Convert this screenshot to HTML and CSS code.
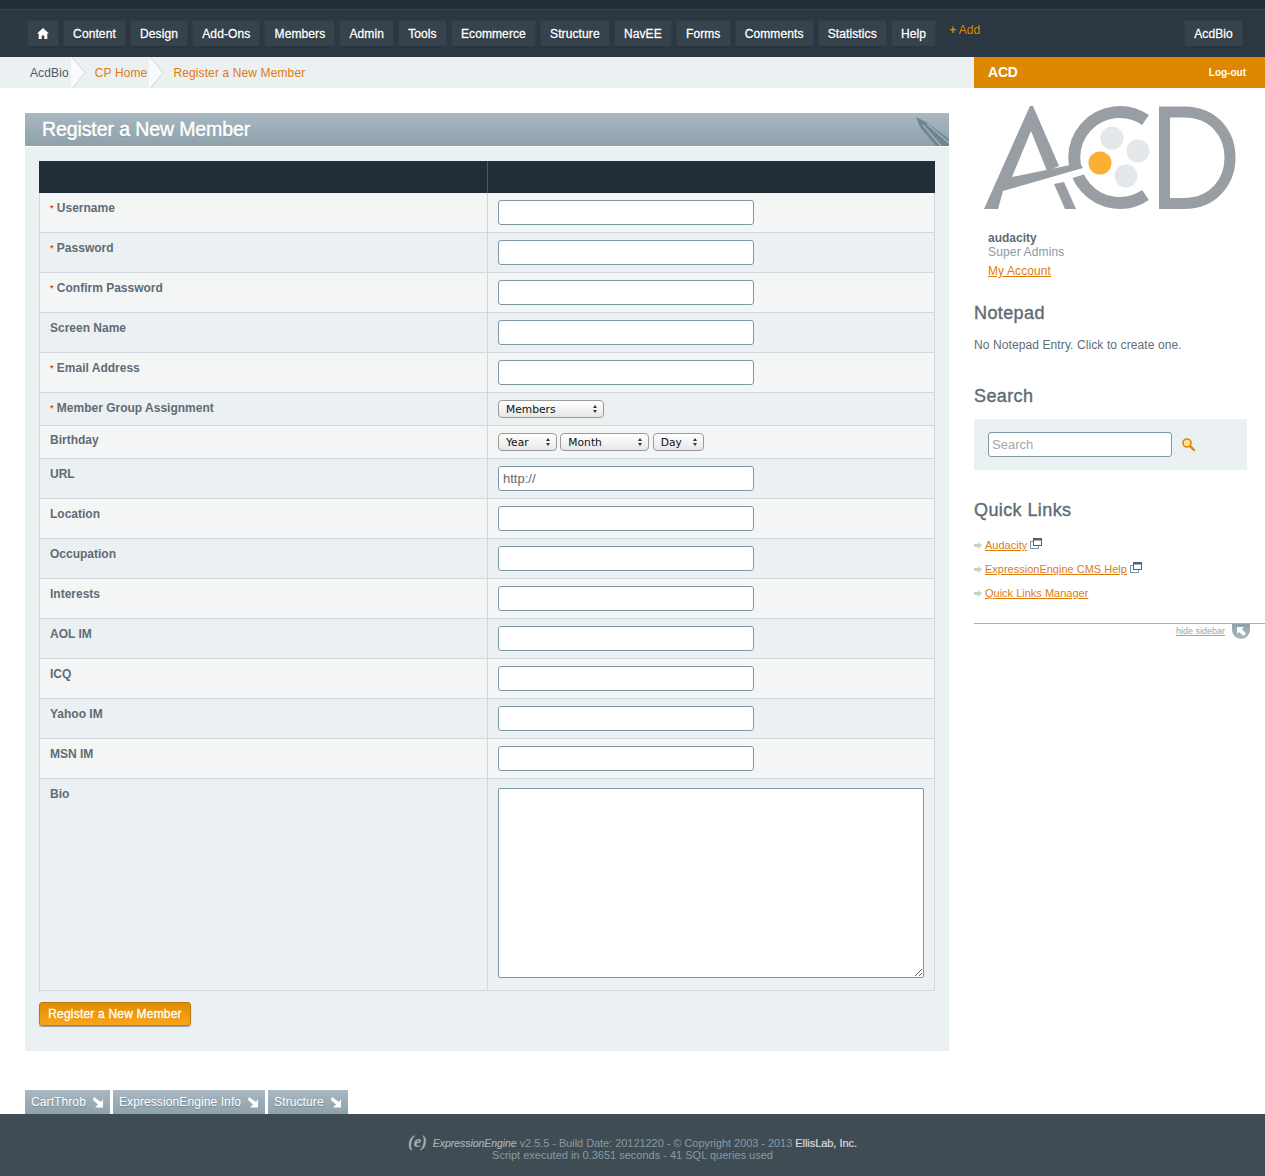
FILE: index.html
```html
<!DOCTYPE html>
<html lang="en">
<head>
  <meta charset="UTF-8">
  <title>Register a New Member | ExpressionEngine</title>
  <link rel="stylesheet" href="styles.css">
</head>
<body>

  <nav class="topnav">
    <ul class="nav-list">
      <li><a class="nav-btn nav-home" href="#"><svg width="12" height="11" viewBox="0 0 12 11"><path d="M6 0 L12 5.6 H10.3 V11 H7.3 V7.4 H4.7 V11 H1.7 V5.6 H0 Z" fill="#fff"/></svg></a></li>
      <li><a class="nav-btn" href="#">Content</a></li>
      <li><a class="nav-btn" href="#">Design</a></li>
      <li><a class="nav-btn" href="#">Add-Ons</a></li>
      <li><a class="nav-btn" href="#">Members</a></li>
      <li><a class="nav-btn" href="#">Admin</a></li>
      <li><a class="nav-btn" href="#">Tools</a></li>
      <li><a class="nav-btn" href="#">Ecommerce</a></li>
      <li><a class="nav-btn" href="#">Structure</a></li>
      <li><a class="nav-btn" href="#">NavEE</a></li>
      <li><a class="nav-btn" href="#">Forms</a></li>
      <li><a class="nav-btn" href="#">Comments</a></li>
      <li><a class="nav-btn" href="#">Statistics</a></li>
      <li><a class="nav-btn" href="#">Help</a></li>
      <li><a class="nav-add" href="#"><b>+</b> Add</a></li>
    </ul>
    <a class="nav-btn nav-site" href="#">AcdBio</a>
  </nav>

  <div class="subbar">
    <div class="crumbs">
      <a class="crumb crumb-first" href="#">AcdBio</a>
      <svg class="chevron" width="15" height="31" viewBox="0 0 15 31"><polygon points="0,0 1,0 14,15.5 1,31 0,31" fill="#f9fafb"/><polyline points="1,0 14,15.5 2,31" fill="none" stroke="#ced6dc"/></svg>
      <a class="crumb" href="#">CP Home</a>
      <svg class="chevron" width="15" height="31" viewBox="0 0 15 31"><polygon points="0,0 1,0 14,15.5 1,31 0,31" fill="#f9fafb"/><polyline points="1,0 14,15.5 2,31" fill="none" stroke="#ced6dc"/></svg>
      <a class="crumb" href="#">Register a New Member</a>
    </div>
    <div class="site-bar">
      <span class="site-name">ACD</span>
      <a class="logout" href="#">Log-out</a>
    </div>
  </div>

  <div class="page">
    <main class="main">
      <h2 class="page-title">Register a New Member
        <svg class="title-icon" width="34" height="33" viewBox="0 0 34 33"><path d="M1 4 L11 9 L34 26 V33 H21 L5 14 Z" fill="#6f8592"/><path d="M8 12 L26 33 M12 11 L34 30" stroke="#9fb0ba" stroke-width="1.5" fill="none"/></svg>
      </h2>
      <div class="panel">
        <form>
          <table class="form-table">
            <thead>
              <tr><th></th><th></th></tr>
            </thead>
            <tbody>
              <tr class="odd"><td class="lbl"><i>*</i> Username</td><td><input class="field" type="text"></td></tr>
              <tr><td class="lbl"><i>*</i> Password</td><td><input class="field" type="password"></td></tr>
              <tr class="odd"><td class="lbl"><i>*</i> Confirm Password</td><td><input class="field" type="password"></td></tr>
              <tr><td class="lbl">Screen Name</td><td><input class="field" type="text"></td></tr>
              <tr class="odd"><td class="lbl"><i>*</i> Email Address</td><td><input class="field" type="text"></td></tr>
              <tr class="row-select"><td class="lbl"><i>*</i> Member Group Assignment</td><td>
                <span class="sel sel-group"><select><option>Members</option></select></span>
              </td></tr>
              <tr class="odd row-select"><td class="lbl">Birthday</td><td>
                <span class="sel sel-year"><select><option>Year</option></select></span>
                <span class="sel sel-month"><select><option>Month</option></select></span>
                <span class="sel sel-day"><select><option>Day</option></select></span>
              </td></tr>
              <tr><td class="lbl">URL</td><td><input class="field" type="text" value="http://"></td></tr>
              <tr class="odd"><td class="lbl">Location</td><td><input class="field" type="text"></td></tr>
              <tr><td class="lbl">Occupation</td><td><input class="field" type="text"></td></tr>
              <tr class="odd"><td class="lbl">Interests</td><td><input class="field" type="text"></td></tr>
              <tr><td class="lbl">AOL IM</td><td><input class="field" type="text"></td></tr>
              <tr class="odd"><td class="lbl">ICQ</td><td><input class="field" type="text"></td></tr>
              <tr><td class="lbl">Yahoo IM</td><td><input class="field" type="text"></td></tr>
              <tr class="odd"><td class="lbl">MSN IM</td><td><input class="field" type="text"></td></tr>
              <tr class="row-bio"><td class="lbl">Bio</td><td><textarea class="bio"></textarea></td></tr>
            </tbody>
          </table>
          <button class="submit" type="submit">Register a New Member</button>
        </form>
      </div>
    </main>

    <aside class="sidebar">
      <svg class="logo" width="266" height="115" viewBox="974 100 266 115">
        <path d="M1145.5 120 A45.5 45.5 0 1 0 1145.5 195" fill="none" stroke="#989ea3" stroke-width="12"/>
        <polygon points="1000,193 1090,165 1092,172 1004,199" fill="#fff"/>
        <path d="M984 209 L1030 106 L1033 106 L1059 166 L1047 171 L1031 131 L1012 177 L1080 163 L1083 168 L1003 191 L998 209 Z" fill="#989ea3"/>
        <polygon points="1054,184 1064,182 1076,209 1065,209" fill="#989ea3"/>
        <path d="M1164.5 112 V203.5 H1184 C1214 203.5 1230 181 1230 157.5 C1230 134 1214 112 1184 112 Z" fill="none" stroke="#989ea3" stroke-width="11"/>
        <circle cx="1100" cy="163" r="11.5" fill="#fbb034"/>
        <circle cx="1112" cy="138" r="11.5" fill="#e5e8ea"/>
        <circle cx="1138" cy="151" r="11.5" fill="#e5e8ea"/>
        <circle cx="1126" cy="176" r="11.5" fill="#e5e8ea"/>
      </svg>

      <div class="user-info">
        <strong>audacity</strong>
        <span class="user-group">Super Admins</span>
        <a class="user-link" href="#">My Account</a>
      </div>

      <h3 class="side-title side-notepad">Notepad</h3>
      <p class="notepad-text">No Notepad Entry. Click to create one.</p>

      <h3 class="side-title side-search">Search</h3>
      <div class="search-box">
        <input class="field search-input" type="text" placeholder="Search">
        <svg class="search-icon" width="15" height="15" viewBox="0 0 15 15"><circle cx="6" cy="6" r="4" fill="#fbe3a6" stroke="#dd8800" stroke-width="1.6"/><path d="M9 9 L13 13" stroke="#dd8800" stroke-width="2.4" stroke-linecap="round"/></svg>
      </div>

      <h3 class="side-title side-links">Quick Links</h3>
      <ul class="quick-links">
        <li><svg class="bullet" width="8" height="7" viewBox="0 0 8 7"><path d="M0 2 H4 V0 L8 3.5 L4 7 V5 H0 Z" fill="#c6d2c8"/></svg><a href="#">Audacity</a><svg class="ext" width="12" height="11" viewBox="0 0 12 11"><rect x="0.5" y="3.5" width="8" height="7" fill="#fff" stroke="#7f98ab"/><rect x="3.5" y="0.5" width="8" height="7" fill="#fff" stroke="#4e6272"/><rect x="3" y="0" width="9" height="2.5" fill="#4e6272"/></svg></li>
        <li><svg class="bullet" width="8" height="7" viewBox="0 0 8 7"><path d="M0 2 H4 V0 L8 3.5 L4 7 V5 H0 Z" fill="#c6d2c8"/></svg><a href="#">ExpressionEngine CMS Help</a><svg class="ext" width="12" height="11" viewBox="0 0 12 11"><rect x="0.5" y="3.5" width="8" height="7" fill="#fff" stroke="#7f98ab"/><rect x="3.5" y="0.5" width="8" height="7" fill="#fff" stroke="#4e6272"/><rect x="3" y="0" width="9" height="2.5" fill="#4e6272"/></svg></li>
        <li><svg class="bullet" width="8" height="7" viewBox="0 0 8 7"><path d="M0 2 H4 V0 L8 3.5 L4 7 V5 H0 Z" fill="#c6d2c8"/></svg><a href="#">Quick Links Manager</a></li>
      </ul>

      <div class="side-foot">
        <a class="hide-link" href="#">hide sidebar</a>
        <span class="hide-btn"><svg width="9" height="9" viewBox="0 0 9 9"><path d="M0 0 H7 L5 2 L9 6.5 L6.5 9 L2 5 L0 7 Z" fill="#fff"/></svg></span>
      </div>
    </aside>
  </div>

  <div class="tabs">
    <a class="tab" href="#">CartThrob <svg width="11" height="11" viewBox="0 0 11 11"><path d="M1 0 L8 5 L10 2 V10.5 H2 L5 7.5 L0 3 Z" fill="#fff"/></svg></a>
    <a class="tab" href="#">ExpressionEngine Info <svg width="11" height="11" viewBox="0 0 11 11"><path d="M1 0 L8 5 L10 2 V10.5 H2 L5 7.5 L0 3 Z" fill="#fff"/></svg></a>
    <a class="tab" href="#">Structure <svg width="11" height="11" viewBox="0 0 11 11"><path d="M1 0 L8 5 L10 2 V10.5 H2 L5 7.5 L0 3 Z" fill="#fff"/></svg></a>
  </div>

  <footer class="footer">
    <p class="footer-build"><span class="ee-mark">(e)</span> <em>ExpressionEngine</em> v2.5.5 - Build Date: 20121220 - © Copyright 2003 - 2013 <strong>EllisLab, Inc.</strong></p>
    <p>Script executed in 0.3651 seconds - 41 SQL queries used</p>
  </footer>

</body>
</html>
```

FILE: styles.css
```css
* {
  box-sizing: border-box;
}

body {
  margin: 0;
  background: #fff;
  font-family: 'Liberation Sans', Arial, sans-serif;
  font-size: 12px;
  color: #5f6c74;
}

a {
  color: #e07b10;
}

/* top nav */
.topnav {
  display: flex;
  justify-content: space-between;
  align-items: flex-start;
  height: 57px;
  padding: 11px 22px 0 27px;
  background: #2c3841;
  border-top: 9px solid #222e37;
  box-shadow: inset 0 1px 0 #364550;
}

.nav-list {
  display: flex;
  gap: 4px;
  margin: 0;
  padding: 0;
  list-style: none;
}

.nav-btn {
  display: block;
  height: 27px;
  padding: 0 9.12px;
  background: #36434d;
  border: 1px solid #2f3c45;
  border-bottom-color: #28333b;
  color: #fff;
  font-size: 12px;
  letter-spacing: 0.1px;
  line-height: 26px;
  text-decoration: none;
  text-shadow: 0 1px 1px #1c252c;
  -webkit-text-stroke: 0.3px #fff;
}

.nav-home {
  display: flex;
  align-items: center;
  padding: 0 9px;
}

.nav-add {
  display: block;
  margin-left: 9px;
  color: #dd8800;
  font-size: 12px;
  line-height: 20px;
  text-decoration: none;
}

/* breadcrumb row */
.subbar {
  display: flex;
  height: 31px;
}

.crumbs {
  display: flex;
  align-items: center;
  flex: 1;
  background: #ebf0f3;
}

.crumb {
  padding-top: 1px;
  font-size: 12px;
  letter-spacing: 0.12px;
  line-height: 30px;
  text-decoration: none;
}

.crumb-first {
  padding-left: 30px;
  color: #4f5a62;
}

.chevron {
  margin: 0 9px 0 3px;
}

.crumb + .chevron {
  margin-left: 2px;
}

.site-bar {
  display: flex;
  justify-content: space-between;
  align-items: center;
  width: 291px;
  padding: 0 19px 0 14px;
  background: #dd8800;
  color: #fff;
}

.site-name {
  margin-top: -1px;
  font-size: 14px;
  font-weight: bold;
  letter-spacing: -0.2px;
}

.logout {
  color: #fff;
  font-size: 10px;
  font-weight: bold;
  text-decoration: none;
}

/* columns */
.page {
  display: flex;
  align-items: flex-start;
}

.main {
  width: 924px;
  margin: 25px 0 0 25px;
}

.sidebar {
  width: 291px;
  margin: 12px 0 0 25px;
}

.page-title {
  position: relative;
  height: 34px;
  margin: 0;
  padding-left: 17px;
  overflow: hidden;
  background: linear-gradient(#a9b8c1, #8fa1ac);
  border-bottom: 1px solid #fff;
  color: #fff;
  font-size: 19.5px;
  font-weight: normal;
  letter-spacing: -0.1px;
  line-height: 32px;
  text-shadow: 0 1px 1px #6f8592;
  -webkit-text-stroke: 0.5px #fff;
}

.title-icon {
  position: absolute;
  right: 0;
  top: 0;
}

.panel {
  height: 904px;
  padding: 14px 14px 0;
  background: #ebf0f3;
}

/* form table */
.form-table {
  width: 896px;
  table-layout: fixed;
  border-collapse: collapse;
  border-left: 1px solid #d0d7df;
  border-right: 1px solid #d0d7df;
}

.form-table th {
  height: 32px;
  padding: 0;
  background: #222e37;
  border-left: 1px solid #222e37;
  border-right: 1px solid #222e37;
}

.form-table th:first-child {
  border-right: 1px solid #4a5862;
}

.form-table th + th {
  border-left: 1px solid #4a5862;
}

.form-table th:first-child,
.lbl {
  width: 448px;
}

.form-table td {
  padding: 7px 10px 7px 10px;
  background: #ebf0f3;
  border-bottom: 1px solid #d0d7df;
  vertical-align: top;
}

.form-table tr.odd td {
  background: #f4f6f6;
}

.form-table td + td {
  border-left: 1px solid #d0d7df;
}

.form-table .lbl {
  padding-top: 8px;
  color: #5f6c74;
  font-weight: bold;
  line-height: 14px;
}

.form-table .row-select.odd .lbl {
  padding-top: 7px;
}

.lbl i {
  color: #d35a10;
  font-size: 9px;
  font-style: normal;
  vertical-align: 1px;
}

.field {
  display: block;
  width: 256px;
  height: 25px;
  padding: 0 4px;
  background: #fff;
  border: 1px solid #7f98a6;
  border-radius: 3px;
  color: #5f6c74;
  font-family: 'Liberation Sans', Arial, sans-serif;
  font-size: 13px;
}

.bio {
  display: block;
  width: 426px;
  height: 190px;
  margin-top: 2px;
  margin-bottom: 5px;
  background: #fff;
  border: 1px solid #7f98a6;
  border-radius: 2px;
}

/* selects */
.sel {
  position: relative;
  display: inline-block;
  height: 18px;
  vertical-align: top;
}

.sel select {
  display: block;
  width: 100%;
  height: 18px;
  padding: 1px 7px 0;
  appearance: none;
  background: linear-gradient(#fff, #f1f1f1 60%, #e6e6e6);
  border: 1px solid #9a9a9a;
  border-radius: 4px;
  color: #111;
  font-family: 'DejaVu Sans', sans-serif;
  font-size: 10.7px;
  line-height: 15px;
}

.sel::before,
.sel::after {
  position: absolute;
  right: 7px;
  width: 0;
  height: 0;
  border-left: 2px solid transparent;
  border-right: 2px solid transparent;
  content: "";
  pointer-events: none;
}

.sel::before {
  top: 5px;
  border-bottom: 3px solid #333;
}

.sel::after {
  top: 10px;
  border-top: 3px solid #333;
}

.sel-group { width: 106px; }
.sel-year { width: 59px; }
.sel-month { width: 89px; }
.sel-day { width: 51px; }

.submit {
  display: block;
  width: 152px;
  height: 24px;
  margin-top: 11px;
  padding: 0;
  background: linear-gradient(#e08d00, #fba41c);
  border: 1px solid #b87a10;
  border-radius: 3px;
  box-shadow: 0 1px 1px #9aa7af;
  color: #fff;
  font-family: 'Liberation Sans', Arial, sans-serif;
  font-size: 12px;
  letter-spacing: 0.2px;
  -webkit-text-stroke: 0.3px #fff;
}

/* sidebar */
.logo {
  display: block;
}

.user-info {
  padding: 16px 0 0 14px;
  line-height: 14px;
}

.user-info strong,
.user-group,
.user-link {
  display: block;
}

.user-group {
  color: #8a98a2;
  letter-spacing: 0.15px;
}

.user-link {
  width: max-content;
  margin-top: 5px;
  letter-spacing: 0.1px;
}

.side-title {
  margin: 0;
  font-size: 18px;
  font-weight: normal;
  letter-spacing: 0.4px;
  line-height: 22px;
  -webkit-text-stroke: 0.4px #5f6c74;
}

.side-notepad {
  margin-top: 24px;
}

.notepad-text {
  margin: 13px 0 0;
  letter-spacing: 0.1px;
  line-height: 16px;
}

.side-search {
  margin-top: 32px;
}

.search-box {
  display: flex;
  align-items: center;
  width: 273px;
  height: 51px;
  margin-top: 12px;
  padding-left: 14px;
  background: #ebf0f3;
}

.search-input {
  width: 184px;
  padding: 0 3px;
  font-size: 13px;
}

.search-input::placeholder {
  color: #a3a9ad;
}

.search-icon {
  margin-left: 9px;
}

.side-links {
  margin-top: 29px;
}

.quick-links {
  margin: 12px 0 0;
  padding: 0;
  list-style: none;
}

.quick-links li {
  display: flex;
  align-items: center;
  height: 24px;
  font-size: 11px;
}

.bullet {
  margin-right: 3px;
}

.ext {
  margin: -3px 0 0 3px;
}

.side-foot {
  display: flex;
  justify-content: flex-end;
  height: 16px;
  margin-top: 18px;
  padding-right: 15px;
  border-top: 1px solid #a8b1b6;
}

.hide-link {
  margin-top: 2px;
  color: #9aa5ac;
  font-size: 9px;
}

.hide-btn {
  display: flex;
  justify-content: center;
  align-items: center;
  width: 18px;
  height: 15px;
  margin-left: 7px;
  background: linear-gradient(#8fa1ac, #a9b8c1);
  border-radius: 0 0 9px 9px;
}

/* footer tabs */
.tabs {
  display: flex;
  gap: 3px;
  margin: 39px 0 0 25px;
}

.tab {
  display: flex;
  justify-content: space-between;
  align-items: center;
  height: 24px;
  padding: 0 6px;
  background: linear-gradient(#a9b8c1, #8fa1ac);
  color: #fff;
  font-size: 12px;
  letter-spacing: 0.1px;
  text-decoration: none;
  text-shadow: 0 1px 1px #6f8592;
}

.tab svg {
  margin-left: 7px;
}

.footer {
  height: 62px;
  padding-top: 22px;
  background: #404c54;
  color: #8a9aa3;
  font-size: 11px;
  line-height: 12px;
  text-align: center;
}

.footer p {
  margin: 0;
}

.footer-build {
  height: 13px;
  letter-spacing: -0.05px;
}

.footer strong {
  color: #d8dde0;
  font-weight: normal;
  -webkit-text-stroke: 0.2px #d8dde0;
}

.footer em {
  color: #a5b0b6;
  font-size: 10.5px;
  -webkit-text-stroke: 0.2px #a5b0b6;
}

.ee-mark {
  margin-right: 3px;
  color: #a5b0b6;
  font-family: 'Liberation Serif', serif;
  font-size: 17px;
  font-style: italic;
  font-weight: bold;
  line-height: 12px;
}
```
